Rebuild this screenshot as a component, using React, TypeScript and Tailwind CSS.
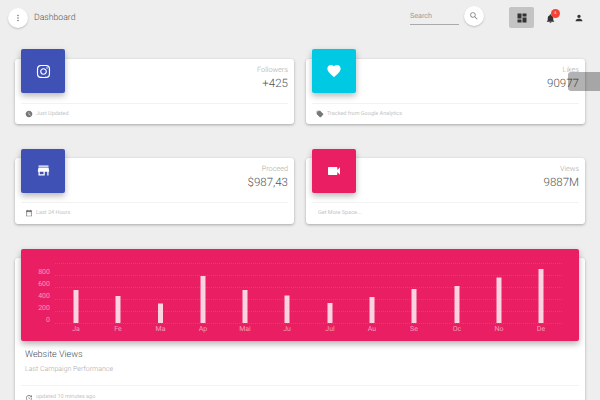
import { MdMoreVert, MdSearch, MdDashboard, MdNotifications, MdPerson, MdFavorite, MdStore, MdVideocam, MdLocalOffer, MdDateRange, MdWatchLater, MdUpdate } from "react-icons/md";
import { FaInstagram } from "react-icons/fa";
import type { ReactNode } from "react";

function Stat({ color, icon, label, value, foot, footIcon }: { color: string; icon: ReactNode; label: string; value: string; foot: string; footIcon?: ReactNode }) {
  return (
    <div className="relative h-[65.5px] rounded-[3px] bg-white shadow-[0_1px_3px_rgba(0,0,0,0.3)] px-[6px]">
      <div className={`absolute left-[6px] top-[-9.5px] flex h-[44px] w-[44px] items-center justify-center rounded-[2px] text-white shadow-[0_3px_6px_rgba(0,0,0,0.28)] ${color}`}>
        {icon}
      </div>
      <div className="flex h-[44px] flex-col items-end pt-[5px]">
        <div className="text-[7.3px] font-light leading-[11px] text-[#aaa]">{label}</div>
        <div className="text-[11.5px] font-light leading-[16px] text-[#555]">{value}</div>
      </div>
      <div className="flex h-[21.5px] items-center gap-[3px] border-t border-[#f2f2f2] pl-[4px] text-[5.5px] text-[#c4c4c4]">
        {footIcon}
        <span className={footIcon ? "" : "pl-[2px]"}>{foot}</span>
      </div>
    </div>
  );
}

const bars = [
  ["Ja", 76, 290], ["Fe", 118, 296], ["Ma", 160.5, 303.5], ["Ap", 203, 276], ["Mai", 245, 290], ["Ju", 287, 295.5],
  ["Jul", 330, 303], ["Au", 372, 297], ["Se", 414, 289], ["Oc", 457, 286], ["No", 499, 277.5], ["De", 541, 269],
] as const;

function Chart() {
  return (
    <svg width="558" height="92" viewBox="21 249 558 92" className="block" style={{ fontFamily: "Roboto, sans-serif" }}>
      {[263, 275, 287, 299, 311, 323].map((y) => (
        <line key={y} x1="55" x2="563" y1={y + 0.5} y2={y + 0.5} stroke="#ffffff" strokeOpacity="0.12" strokeDasharray="1 1" />
      ))}
      {[["800", 273.5], ["600", 285.5], ["400", 297.5], ["200", 309.5], ["0", 321.5]].map(([t, y]) => (
        <text key={t} x="50" y={y} textAnchor="end" fontSize="7" fill="#ffffff" fillOpacity="0.55">{t}</text>
      ))}
      {bars.map(([m, x, top]) => (
        <g key={m}>
          <rect x={x - 2.5} y={top} width="5" height={323 - top} fill="#ffffff" fillOpacity="0.8" />
          <text x={x} y="330.5" textAnchor="middle" fontSize="7" fill="#ffffff" fillOpacity="0.55">{m}</text>
        </g>
      ))}
    </svg>
  );
}

export default function App() {
  return (
    <div className="relative h-[400px] w-[600px] overflow-hidden bg-[#eeeeee] font-['Roboto',sans-serif] [text-rendering:geometricPrecision]">
      <header className="flex h-[36px] items-start pl-[8px] pr-[16px]">
        <div className="mt-[8px] flex h-[20px] w-[20px] items-center justify-center rounded-full bg-white text-[#777] shadow-[0_1px_2px_rgba(0,0,0,0.2)]">
          <MdMoreVert size={10} />
        </div>
        <div className="ml-[6px] mt-[11px] text-[8.7px] font-light leading-[14px] text-[#555]">Dashboard</div>
        <div className="ml-auto mt-[6px] h-[19px] w-[49px] border-b border-[#aaa] pt-[5px] text-[7.2px] leading-[10px] text-[#999]">Search</div>
        <div className="ml-[5px] mt-[6px] flex h-[20px] w-[20px] items-center justify-center rounded-full bg-white text-[#888] shadow-[0_1px_2px_rgba(0,0,0,0.2)]">
          <MdSearch size={10} />
        </div>
        <div className="ml-[25px] mt-[7px] flex h-[21px] w-[25px] items-center justify-center rounded-[2px] bg-[#c4c4c4] text-[#333]">
          <MdDashboard size={12} />
        </div>
        <div className="relative ml-[6px] mt-[7px] flex h-[21px] w-[20px] items-center justify-center text-[#333]">
          <MdNotifications size={11} className="mt-[2px]" />
          <span className="absolute right-[0.5px] top-[1.5px] flex h-[9px] w-[9px] items-center justify-center rounded-full bg-[#f44336] text-[4px] text-white">4</span>
        </div>
        <div className="ml-[14px] mt-[7px] flex h-[21px] w-[10px] items-center justify-center text-[#333]">
          <MdPerson size={10} />
        </div>
      </header>

      <main className="px-[15px] pt-[22.5px]">
        <div className="grid grid-cols-2 gap-x-[12px] gap-y-[34px]">
          <Stat color="bg-[#3f51b5]" icon={<FaInstagram size={15} />} label="Followers" value="+425" foot="Just Updated" footIcon={<MdWatchLater size={8} className="text-[#777]" />} />
          <Stat color="bg-[#00cae3]" icon={<MdFavorite size={16} />} label="Likes" value="90977" foot="Tracked from Google Analytics" footIcon={<MdLocalOffer size={8} className="text-[#777]" />} />
          <Stat color="bg-[#3f51b5]" icon={<MdStore size={15} />} label="Proceed" value="$987,43" foot="Last 24 Hours" footIcon={<MdDateRange size={8} className="text-[#777]" />} />
          <Stat color="bg-[#e91e63]" icon={<MdVideocam size={16} />} label="Views" value="9887M" foot="Get More Space..." />
        </div>

        <div className="relative mt-[34px] h-[160px] rounded-[3px] bg-white px-[6px] shadow-[0_1px_3px_rgba(0,0,0,0.3)]">
          <div className="absolute left-[6px] top-[-8.5px] rounded-[2px] bg-[#e91e63] shadow-[0_3px_6px_rgba(0,0,0,0.3)]">
            <Chart />
          </div>
          <div className="pl-[4px] pt-[90.5px] text-[9px] font-light leading-[14px] text-[#444c58]">Website Views</div>
          <div className="pl-[4px] pt-[1px] text-[7px] font-light leading-[12px] text-[#aaa]">Last Campaign Performance</div>
          <div className="mt-[10px] flex h-[22px] items-center gap-[3px] border-t border-[#f2f2f2] pl-[4px] pt-[2px] text-[5.5px] text-[#c4c4c4]">
            <MdUpdate size={8} className="text-[#777]" />
            <span>updated 10 minutes ago</span>
          </div>
        </div>
      </main>

      <div className="absolute right-0 top-[72px] h-[19px] w-[32px] rounded-l-[3px] bg-[rgba(0,0,0,0.3)]" />
    </div>
  );
}
